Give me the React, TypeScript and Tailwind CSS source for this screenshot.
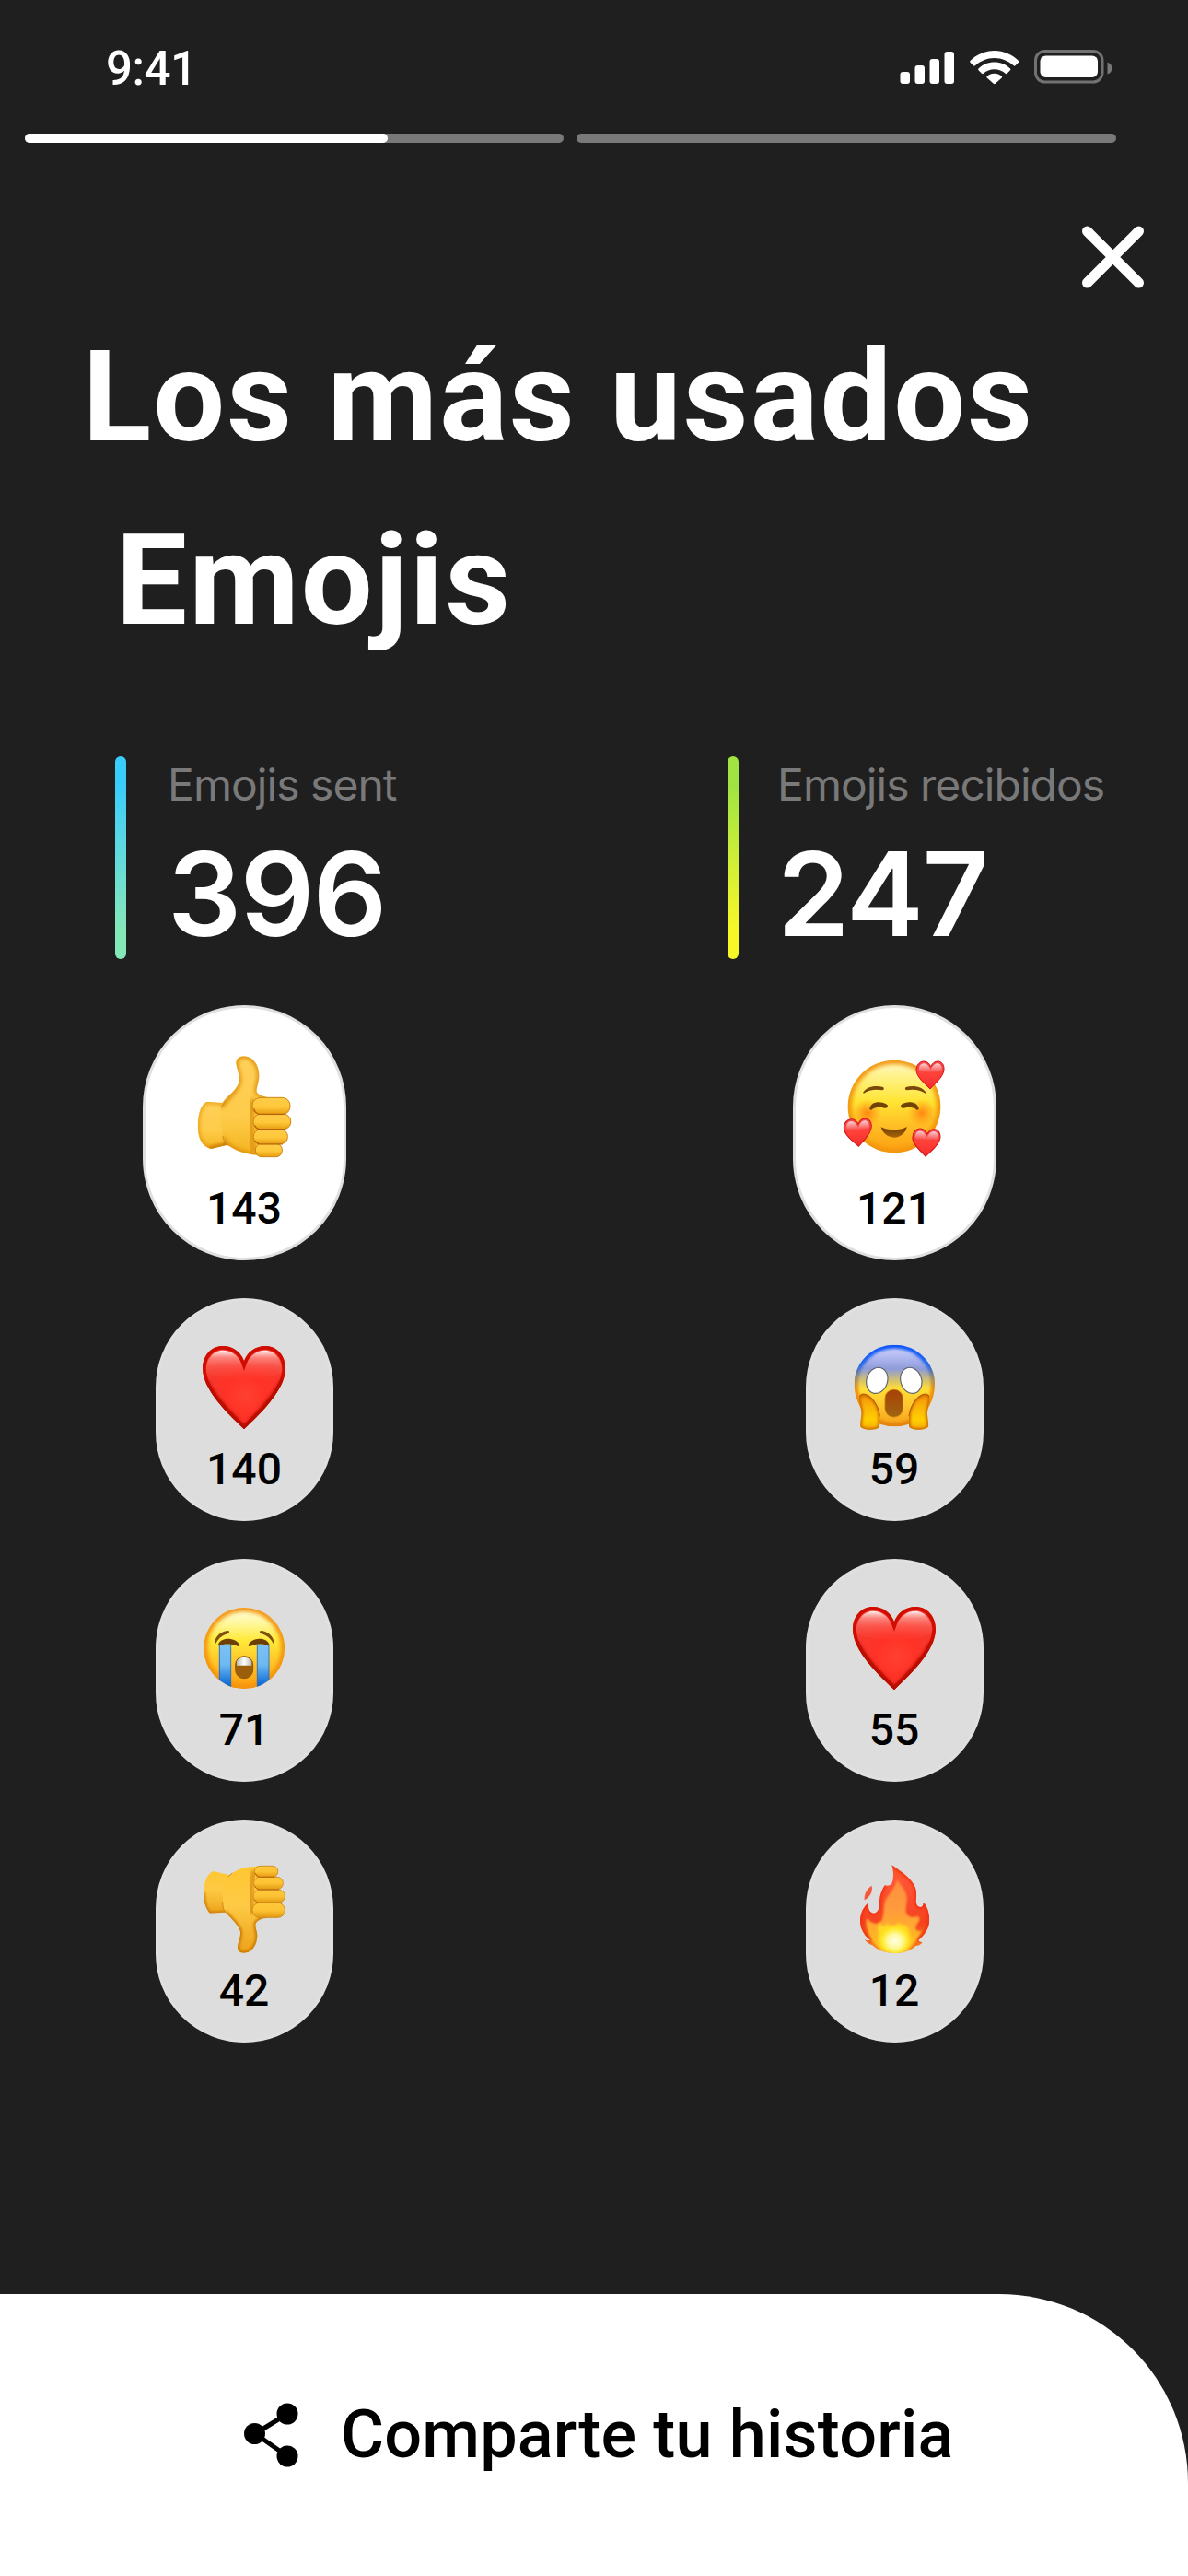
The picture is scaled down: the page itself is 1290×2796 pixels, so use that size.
import type { ComponentType } from "react";

function ThumbsUp() {
  return (
    <svg viewBox="208 196 336 336" className="h-full w-full">
      <defs>
        <linearGradient id="up-skin" x1="0" y1="0" x2="0" y2="1">
          <stop offset="0" stopColor="#FFD05A" />
          <stop offset="0.6" stopColor="#FECC4A" />
          <stop offset="1" stopColor="#F3B01A" />
        </linearGradient>
        <linearGradient id="up-finger" x1="0" y1="0" x2="0" y2="1">
          <stop offset="0" stopColor="#FFCC48" />
          <stop offset="0.55" stopColor="#FEC83A" />
          <stop offset="1" stopColor="#E79C10" />
        </linearGradient>
        <filter id="up-blur" x="-20%" y="-20%" width="140%" height="140%">
          <feGaussianBlur stdDeviation="6" />
        </filter>
        <clipPath id="up-wrist">
          <path d="M258 348 L312 353 L330 480 L318 490 L268 502 C240 496 225 468 225 425 C226 385 238 350 258 348Z" />
        </clipPath>
        <clipPath id="up-hand">
          <path d="M299 370 C300 340 350 320 360 284 C362 258 350 236 350 220 C352 205 364 200 378 200 C406 202 425 230 425 264 C424 292 413 309 418 318 C424 328 445 331 462 338 L440 522 C390 524 350 510 325 491 C308 478 301 440 299 370Z" />
        </clipPath>
      </defs>
      <g clipPath="url(#up-wrist)">
        <rect x="220" y="340" width="120" height="170" fill="url(#up-skin)" />
        <path
          d="M258 348 L312 353 L330 480 L318 490 L268 502 C240 496 225 468 225 425 C226 385 238 350 258 348Z"
          fill="none"
          stroke="#E3960C"
          strokeWidth="10"
          filter="url(#up-blur)"
        />
        <path d="M262 503 L322 490 L322 462" fill="none" stroke="#C06C06" strokeWidth="12" filter="url(#up-blur)" />
      </g>
      <g clipPath="url(#up-hand)">
        <rect x="290" y="195" width="180" height="340" fill="url(#up-skin)" />
        <path
          d="M302 366 C320 335 350 320 360 284 C362 258 350 236 350 220 C352 205 364 200 378 200 C406 202 425 230 425 264 C424 292 413 309 418 318 C424 328 445 331 462 338 L440 522 C390 524 350 510 325 491 L306 466"
          fill="none"
          stroke="#DC8D08"
          strokeWidth="13"
          filter="url(#up-blur)"
        />
        <path d="M410 340 C390 390 396 440 408 525" fill="none" stroke="#E39B17" strokeWidth="24" filter="url(#up-blur)" />
      </g>
      <path d="M303 367 C306 360 310 354 316 348 M307 461 C309 474 314 484 326 491" fill="none" stroke="#D48A17" strokeWidth="3" strokeLinecap="round" />
      <g stroke="#CE8512" strokeWidth="3">
        <rect x="413" y="485" width="87" height="43" rx="20" fill="url(#up-finger)" />
        <rect x="407" y="439" width="111" height="47" rx="22" fill="url(#up-finger)" />
        <rect x="406" y="389" width="122" height="49" rx="23" fill="url(#up-finger)" />
        <rect x="403" y="335" width="123" height="55" rx="26" fill="url(#up-finger)" />
      </g>
      <path d="M409 372 Q412 386 424 389 H508 M411 426 Q416 437 425 438 H508 M412 476 Q417 486 428 487 H500" fill="none" stroke="#B9640B" strokeWidth="3.5" strokeLinecap="round" />
    </svg>
  );
}

function ThumbsDown() {
  return (
    <svg viewBox="198 189 294 294" className="h-full w-full">
      <defs>
        <linearGradient id="down-skin" x1="0" y1="0" x2="0" y2="1">
          <stop offset="0" stopColor="#FFC630" />
          <stop offset="0.45" stopColor="#FECA45" />
          <stop offset="1" stopColor="#ECA017" />
        </linearGradient>
        <linearGradient id="down-finger" x1="0" y1="0" x2="0" y2="1">
          <stop offset="0" stopColor="#FFC83C" />
          <stop offset="0.5" stopColor="#FDC334" />
          <stop offset="1" stopColor="#E39A12" />
        </linearGradient>
        <filter id="down-blur" x="-20%" y="-20%" width="140%" height="140%">
          <feGaussianBlur stdDeviation="5" />
        </filter>
        <clipPath id="down-wrist">
          <path d="M244 213 L305 227 L300 346 L234 350 C219 335 213 310 213 282 C214 250 224 222 244 213Z" />
        </clipPath>
        <clipPath id="down-hand">
          <path d="M296 228 C325 203 352 197 400 198 L420 365 C403 366 390 372 384 381 C378 393 388 405 388 424 C387 452 372 478 347 479 C333 479 324 473 324 461 C325 443 334 430 333 410 C328 388 300 365 284 346 C272 330 270 250 296 228Z" />
        </clipPath>
      </defs>
      <g clipPath="url(#down-wrist)">
        <rect x="205" y="205" width="110" height="150" fill="url(#down-skin)" />
        <path d="M213 282 C213 320 222 342 236 351 L290 347" fill="none" stroke="#C87608" strokeWidth="10" filter="url(#down-blur)" />
      </g>
      <g clipPath="url(#down-hand)">
        <rect x="265" y="190" width="160" height="295" fill="url(#down-skin)" />
        <path
          d="M420 365 C403 366 390 372 384 381 C378 393 388 405 388 424 C387 452 372 478 347 479 C333 479 324 473 324 461 C325 443 334 430 333 410 C328 388 300 365 284 346"
          fill="none"
          stroke="#C97804"
          strokeWidth="12"
          filter="url(#down-blur)"
        />
        <path d="M378 212 C364 260 364 310 372 352" fill="none" stroke="#E09A1B" strokeWidth="18" filter="url(#down-blur)" />
      </g>
      <path d="M294 230 C297 227 301 224 306 220 M275 314 C274 328 278 341 286 348" fill="none" stroke="#D18A17" strokeWidth="3" strokeLinecap="round" />
      <g stroke="#CD8513" strokeWidth="2.5">
        <rect x="379" y="196" width="76" height="36" rx="17" fill="url(#down-finger)" />
        <rect x="377" y="232" width="95" height="40" rx="19" fill="url(#down-finger)" />
        <rect x="375" y="273" width="103" height="43" rx="21" fill="url(#down-finger)" />
        <rect x="372" y="316" width="106" height="48" rx="23" fill="url(#down-finger)" />
      </g>
      <path d="M382 220 Q386 230 395 232 H444 M380 262 Q386 272 394 273 H458 M378 306 Q383 315 392 316 H464" fill="none" stroke="#B9660C" strokeWidth="3" strokeLinecap="round" />
    </svg>
  );
}

function RedHeart() {
  return (
    <svg viewBox="198 171 294 294" className="h-full w-full">
      <defs>
        <radialGradient id="heart-fill" gradientUnits="userSpaceOnUse" cx="352" cy="345" r="150">
          <stop offset="0" stopColor="#FF4030" />
          <stop offset="0.45" stopColor="#FF3226" />
          <stop offset="1" stopColor="#F53A30" />
        </radialGradient>
        <linearGradient id="heart-gloss" x1="0" y1="0" x2="0" y2="1">
          <stop offset="0" stopColor="#fff" stopOpacity="0.95" />
          <stop offset="0.25" stopColor="#FFC0BA" stopOpacity="0.55" />
          <stop offset="0.6" stopColor="#FF8078" stopOpacity="0.3" />
          <stop offset="1" stopColor="#FF6A60" stopOpacity="0" />
        </linearGradient>
        <filter id="heart-blur" x="-20%" y="-20%" width="140%" height="140%">
          <feGaussianBlur stdDeviation="6" />
        </filter>
        <filter id="heart-soft" x="-20%" y="-20%" width="140%" height="140%">
          <feGaussianBlur stdDeviation="2" />
        </filter>
        <clipPath id="heart-clip">
          <path d="M345 454 C318 425 210 335 210 256 C210 214 238 183 276 183 C308 183 334 202 345 232 C356 202 382 183 414 183 C452 183 480 214 480 256 C480 335 372 425 345 454Z" />
        </clipPath>
      </defs>
      <g clipPath="url(#heart-clip)">
        <rect x="200" y="175" width="290" height="290" fill="url(#heart-fill)" />
        <path d="M222 268 C219 228 244 197 276 197 C308 197 330 220 345 250 C360 220 382 197 414 197 C446 197 471 228 468 268 C440 300 250 300 222 268Z" fill="url(#heart-gloss)" filter="url(#heart-soft)" />
        <path d="M345 454 C318 425 210 335 210 256 C210 214 238 183 276 183 C308 183 334 202 345 232 C356 202 382 183 414 183 C452 183 480 214 480 256 C480 335 372 425 345 454Z" fill="none" stroke="#CF0D05" strokeWidth="22" filter="url(#heart-soft)" />
        <path d="M218 300 C248 365 320 428 345 456 C370 428 442 365 472 300" fill="none" stroke="#B00B03" strokeWidth="20" filter="url(#heart-blur)" />
      </g>
    </svg>
  );
}

const miniHeart =
  "M0 45 C-14 30 -45 8 -45 -17 C-45 -33 -34 -45 -21 -45 C-10 -45 -2 -38 2 -28 C7 -39 15 -45 25 -45 C38 -45 46 -33 45 -18 C43 8 14 28 0 45Z";

function MiniHeart({ transform }: { transform: string }) {
  return (
    <g transform={transform}>
      <path d={miniHeart} fill="url(#mini-fill)" stroke="#D3151B" strokeWidth="3" />
      <path d="M-36 -14 C-38 -30 -30 -38 -20 -38 C-10 -38 -3 -28 1 -17 C8 -30 15 -38 24 -38 C34 -38 40 -28 37 -14 C20 -6 -20 -6 -36 -14Z" fill="url(#mini-gloss)" />
    </g>
  );
}

function SmilingHearts() {
  return (
    <svg viewBox="195 196 336 336" className="h-full w-full">
      <defs>
        <linearGradient id="love-face" x1="0" y1="0" x2="0" y2="1">
          <stop offset="0" stopColor="#FFF9C9" />
          <stop offset="0.22" stopColor="#FFF07A" />
          <stop offset="0.45" stopColor="#FFE433" />
          <stop offset="0.7" stopColor="#FFBF24" />
          <stop offset="1" stopColor="#FC9E12" />
        </linearGradient>
        <radialGradient id="love-cheek">
          <stop offset="0" stopColor="#FF7A0C" stopOpacity="0.85" />
          <stop offset="1" stopColor="#FF8A10" stopOpacity="0" />
        </radialGradient>
        <linearGradient id="love-mouth" x1="0" y1="0" x2="0" y2="1">
          <stop offset="0" stopColor="#6B3A04" />
          <stop offset="1" stopColor="#A8650A" />
        </linearGradient>
        <linearGradient id="mini-fill" x1="0" y1="0" x2="0" y2="1">
          <stop offset="0" stopColor="#F0474D" />
          <stop offset="0.5" stopColor="#FF4038" />
          <stop offset="1" stopColor="#F02B2B" />
        </linearGradient>
        <linearGradient id="mini-gloss" x1="0" y1="0" x2="0" y2="1">
          <stop offset="0" stopColor="#fff" stopOpacity="0.75" />
          <stop offset="1" stopColor="#fff" stopOpacity="0" />
        </linearGradient>
        <filter id="love-blur" x="-20%" y="-20%" width="140%" height="140%">
          <feGaussianBlur stdDeviation="7" />
        </filter>
        <clipPath id="love-clip">
          <circle cx="363" cy="364" r="151" />
        </clipPath>
      </defs>
      <g clipPath="url(#love-clip)">
        <circle cx="363" cy="364" r="151" fill="url(#love-face)" />
        <circle cx="363" cy="364" r="149" fill="none" stroke="#F2960A" strokeWidth="22" filter="url(#love-blur)" />
        <circle cx="275" cy="385" r="46" fill="url(#love-cheek)" />
        <circle cx="453" cy="385" r="46" fill="url(#love-cheek)" />
      </g>
      <path d="M261 319 C272 300 300 293 327 301 C331 305 330 310 325 311 C300 306 280 311 264 321Z" fill="#79470A" />
      <path d="M467 319 C455 300 428 293 401 301 C397 305 398 310 403 311 C428 306 448 311 464 321Z" fill="#79470A" />
      <path d="M283 371 C287 354 300 350 314 350 C330 351 341 357 342 362 C343 368 337 370 331 369 C315 364 300 366 289 375 C285 376 283 374 283 371Z" fill="#714207" />
      <path d="M443 371 C439 354 426 350 412 350 C396 351 385 357 384 362 C383 368 389 370 395 369 C411 364 426 366 437 375 C441 376 443 374 443 371Z" fill="#714207" />
      <path d="M320 431 C340 443 385 443 404 430 C402 448 385 465 362 465 C340 465 324 448 320 431Z" fill="url(#love-mouth)" />
      <MiniHeart transform="translate(480 262)" />
      <MiniHeart transform="translate(245 449) rotate(-3)" />
      <MiniHeart transform="translate(467 482) rotate(2)" />
    </svg>
  );
}

function Screaming() {
  return (
    <svg viewBox="186 171 294 294" className="h-full w-full">
      <defs>
        <linearGradient id="scream-face" x1="0" y1="0" x2="0" y2="1">
          <stop offset="0" stopColor="#DADDFC" />
          <stop offset="0.14" stopColor="#B6BDF3" />
          <stop offset="0.3" stopColor="#8E9BDA" />
          <stop offset="0.44" stopColor="#D6C36A" />
          <stop offset="0.53" stopColor="#FFDE36" />
          <stop offset="0.75" stopColor="#FFC42E" />
          <stop offset="1" stopColor="#F39B16" />
        </linearGradient>
        <linearGradient id="scream-edge" x1="0" y1="0" x2="0" y2="1">
          <stop offset="0" stopColor="#0A53FF" />
          <stop offset="0.25" stopColor="#2068EC" />
          <stop offset="0.42" stopColor="#A78D56" />
          <stop offset="0.55" stopColor="#EE9111" />
          <stop offset="1" stopColor="#E48108" />
        </linearGradient>
        <linearGradient id="scream-mouth" x1="0" y1="0" x2="0" y2="1">
          <stop offset="0" stopColor="#A84006" />
          <stop offset="1" stopColor="#9E6510" />
        </linearGradient>
        <linearGradient id="scream-hand" x1="0" y1="0" x2="0" y2="1">
          <stop offset="0" stopColor="#F08C08" />
          <stop offset="0.35" stopColor="#FAB208" />
          <stop offset="0.7" stopColor="#FFCE00" />
          <stop offset="1" stopColor="#F5A908" />
        </linearGradient>
        <filter id="scream-blur" x="-20%" y="-20%" width="140%" height="140%">
          <feGaussianBlur stdDeviation="4" />
        </filter>
        <clipPath id="scream-clip">
          <path d="M334 179 C407 179 465 236 465 306 C465 385 408 445 334 445 C260 445 203 385 203 306 C203 236 261 179 334 179Z" />
        </clipPath>
        <clipPath id="scream-palm">
          <path d="M218 352 C218 342 226 339 235 339 C262 342 286 385 286 410 V444 C284 458 228 460 223 444 C221 430 228 410 226 396 C224 380 218 366 218 352Z" />
        </clipPath>
      </defs>
      <g clipPath="url(#scream-clip)">
        <rect x="200" y="175" width="270" height="275" fill="url(#scream-face)" />
        <path d="M334 179 C407 179 465 236 465 306 C465 385 408 445 334 445 C260 445 203 385 203 306 C203 236 261 179 334 179Z" fill="none" stroke="url(#scream-edge)" strokeWidth="24" filter="url(#scream-blur)" />
      </g>
      <ellipse cx="277" cy="295" rx="34" ry="43" transform="rotate(18 277 295)" fill="#fff" stroke="#5E6269" strokeWidth="3.5" />
      <ellipse cx="388" cy="295" rx="34" ry="43" transform="rotate(-18 388 295)" fill="#fff" stroke="#5E6269" strokeWidth="3.5" />
      <rect x="303" y="325" width="58" height="89" rx="28" fill="url(#scream-mouth)" stroke="#C97C0E" strokeWidth="2.5" />
      {[undefined, "translate(667 0) scale(-1 1)"].map((transform, i) => (
        <g key={i} transform={transform}>
          <g clipPath="url(#scream-palm)">
            <rect x="210" y="335" width="80" height="125" fill="url(#scream-hand)" />
            <path d="M218 352 C218 342 226 339 235 339 C262 342 286 385 286 410 V444 C284 458 228 460 223 444 C221 430 228 410 226 396 C224 380 218 366 218 352Z" fill="none" stroke="#C86203" strokeWidth="10" filter="url(#scream-blur)" />
          </g>
          <path d="M220 347 C224 339 231 338 239 340 C264 346 284 385 286 412" fill="none" stroke="#A95205" strokeWidth="2.5" />
        </g>
      ))}
    </svg>
  );
}

function Crying() {
  return (
    <svg viewBox="198 180 294 294" className="h-full w-full">
      <defs>
        <linearGradient id="cry-face" x1="0" y1="0" x2="0" y2="1">
          <stop offset="0" stopColor="#FFFDE0" />
          <stop offset="0.2" stopColor="#FFF79A" />
          <stop offset="0.4" stopColor="#FFEA3A" />
          <stop offset="0.65" stopColor="#FFC82A" />
          <stop offset="1" stopColor="#FB9A10" />
        </linearGradient>
        <linearGradient id="cry-tear" x1="0" y1="0" x2="0" y2="1">
          <stop offset="0" stopColor="#7CC1F5" />
          <stop offset="0.45" stopColor="#6DB9F2" />
          <stop offset="0.9" stopColor="#0A67D6" />
        </linearGradient>
        <linearGradient id="cry-teeth">
          <stop offset="0" stopColor="#B9B9B5" />
          <stop offset="0.5" stopColor="#fff" />
          <stop offset="1" stopColor="#B9B9B5" />
        </linearGradient>
        <filter id="cry-blur" x="-20%" y="-20%" width="140%" height="140%">
          <feGaussianBlur stdDeviation="6" />
        </filter>
        <clipPath id="cry-clip">
          <circle cx="345.5" cy="327" r="132" />
        </clipPath>
        <clipPath id="cry-mouth">
          <rect x="317" y="353" width="57" height="72" rx="28" />
        </clipPath>
      </defs>
      <g clipPath="url(#cry-clip)">
        <circle cx="345.5" cy="327" r="132" fill="url(#cry-face)" />
        <circle cx="345.5" cy="327" r="131" fill="none" stroke="#F39307" strokeWidth="22" filter="url(#cry-blur)" />
        <rect x="264" y="313" width="38" height="150" fill="url(#cry-tear)" />
        <rect x="388" y="313" width="38" height="150" fill="url(#cry-tear)" />
        <path d="M265 315 V460 M302 315 V460 M388 315 V460 M426 315 V460" stroke="#1667C4" strokeWidth="2.5" />
      </g>
      <path d="M249 309 C252 286 272 271 294 270 C299 272 298 277 292 280 C275 284 262 295 253 311 C250 313 249 312 249 309Z" fill="#80500A" />
      <path d="M443 309 C440 286 420 271 399 270 C394 272 395 277 401 280 C418 284 431 295 440 311 C442 313 443 312 443 309Z" fill="#80500A" />
      <path d="M261 314 C268 298 288 295 301 297 C316 299 328 307 331 317 C331 322 326 322 320 319 C305 312 278 311 265 319 C261 319 260 317 261 314Z" fill="#6E3F04" />
      <path d="M427 314 C420 298 402 295 389 297 C374 299 362 307 359 317 C359 322 364 322 370 319 C385 312 410 311 423 319 C427 319 428 317 427 314Z" fill="#6E3F04" />
      <g clipPath="url(#cry-mouth)">
        <rect x="315" y="350" width="62" height="80" fill="#9C5E08" />
        <path d="M321 383 V366 Q345 346 370 366 V383Z" fill="url(#cry-teeth)" />
      </g>
      <rect x="317" y="353" width="57" height="72" rx="28" fill="none" stroke="#8A560C" strokeWidth="3" />
    </svg>
  );
}

function Fire() {
  return (
    <svg viewBox="186 189 294 294" className="h-full w-full">
      <defs>
        <linearGradient id="fire-outer" x1="0" y1="0" x2="0" y2="1">
          <stop offset="0" stopColor="#F4581F" />
          <stop offset="0.2" stopColor="#FF5436" />
          <stop offset="0.65" stopColor="#F5421F" />
          <stop offset="1" stopColor="#FB8A1C" />
        </linearGradient>
        <linearGradient id="fire-inner" x1="0" y1="0" x2="0" y2="1">
          <stop offset="0" stopColor="#FF8F3E" />
          <stop offset="0.4" stopColor="#FF9B3D" />
          <stop offset="0.7" stopColor="#FFAE2B" />
          <stop offset="1" stopColor="#FFC81C" />
        </linearGradient>
        <radialGradient id="fire-core">
          <stop offset="0" stopColor="#FFFFE6" />
          <stop offset="0.4" stopColor="#FFF99A" />
          <stop offset="0.7" stopColor="#FFE826" stopOpacity="0.9" />
          <stop offset="1" stopColor="#FFC81C" stopOpacity="0" />
        </radialGradient>
        <filter id="fire-blur" x="-20%" y="-20%" width="140%" height="140%">
          <feGaussianBlur stdDeviation="4" />
        </filter>
        <filter id="fire-soft" x="-20%" y="-20%" width="140%" height="140%">
          <feGaussianBlur stdDeviation="2.5" />
        </filter>
        <clipPath id="fire-clip">
          <path d="M325 193 C352 212 397 240 404 275 C408 296 400 312 408 325 C416 335 430 330 428 314 C442 328 449 355 447 378 C445 402 431 420 412 438 C417 444 421 445 425 443 C420 452 412 455 403 456 C385 473 360 480 334 480 C306 479 280 472 262 454 C250 450 241 442 236 434 C242 439 250 440 256 438 C238 424 222 405 222 372 C224 346 234 328 250 315 C246 333 251 347 264 350 C286 350 284 325 285 308 C287 288 294 272 302 259 C311 261 321 260 325 253 C332 236 331 212 325 193Z" />
        </clipPath>
      </defs>
      <path d="M260 260 C264 282 252 298 236 307 C234 287 244 270 260 260Z" fill="#F4593A" />
      <g clipPath="url(#fire-clip)">
        <rect x="215" y="185" width="240" height="300" fill="url(#fire-outer)" />
        <path
          d="M342 240 C356 262 372 275 374 300 C375 326 362 350 382 360 C396 368 412 354 415 366 C418 380 398 388 404 402 C410 412 420 408 424 404 C410 440 380 476 334 476 C280 476 252 440 246 402 C240 390 240 370 246 366 C256 385 284 390 293 372 C302 350 296 325 306 304 C318 284 336 268 342 240Z"
          fill="url(#fire-inner)"
          filter="url(#fire-soft)"
        />
        <path d="M286 376 C288 404 302 392 310 384 C320 398 340 398 346 380 C352 392 376 384 380 404 C384 430 374 470 335 480 C290 470 270 420 286 376Z" fill="#FFDC22" filter="url(#fire-blur)" />
        <ellipse cx="335" cy="440" rx="62" ry="58" fill="url(#fire-core)" />
        <path
          d="M256 438 C238 424 222 405 222 372 C224 346 234 328 250 315 C246 333 251 347 264 350 C286 350 284 325 285 308 C287 288 294 272 302 259 M404 275 C408 296 400 312 408 325 C416 335 430 330 428 314 C442 328 449 355 447 378 C445 402 431 420 412 438 M325 193 C352 212 397 240 404 275"
          fill="none"
          stroke="#F02F0E"
          strokeWidth="10"
          filter="url(#fire-blur)"
        />
      </g>
    </svg>
  );
}

type Reaction = { Icon: ComponentType; count: number };

const sent: Reaction[] = [
  { Icon: ThumbsUp, count: 143 },
  { Icon: RedHeart, count: 140 },
  { Icon: Crying, count: 71 },
  { Icon: ThumbsDown, count: 42 },
];

const received: Reaction[] = [
  { Icon: SmilingHearts, count: 121 },
  { Icon: Screaming, count: 59 },
  { Icon: RedHeart, count: 55 },
  { Icon: Fire, count: 12 },
];

function ReactionColumn({ items }: { items: Reaction[] }) {
  return (
    <div className="flex w-[221px] flex-col items-center gap-[41px]">
      {items.map(({ Icon, count }, i) =>
        i === 0 ? (
          <div
            key={i}
            className="flex h-[277px] w-[221px] flex-col items-center rounded-full border-[3px] border-[#e0e0e0] bg-white pt-[51px]"
          >
            <div className="h-28 w-28">
              <Icon />
            </div>
            <span className="mt-[31px] text-[48px] leading-[48px] font-medium">{count}</span>
          </div>
        ) : (
          <div
            key={i}
            className="flex h-[242px] w-[193px] flex-col items-center rounded-full border-[3px] border-[#e0e0e0] bg-[#ddd] pt-[45px]"
          >
            <div className="h-[98px] w-[98px]">
              <Icon />
            </div>
            <span className="mt-4 text-[48px] leading-[48px] font-medium">{count}</span>
          </div>
        ),
      )}
    </div>
  );
}

type StatProps = { label: string; value: number; bar: string; className: string };

function Stat({ label, value, bar, className }: StatProps) {
  return (
    <div className={`flex h-[220px] shrink-0 ${className}`}>
      <div className={`h-full w-3 shrink-0 rounded-full ${bar}`} />
      <div className="font-['Inter',sans-serif] whitespace-nowrap">
        <p className="mt-[7px] text-[48px] leading-[48px] tracking-[-0.96px] text-[#797979]">{label}</p>
        <p className="mt-[31px] text-[126px] leading-[126px] font-semibold tracking-[-1.5px] text-white">{value}</p>
      </div>
    </div>
  );
}

function StatusIcons() {
  return (
    <svg viewBox="977 54 231 38" className="h-[38px] w-[231px]" fill="#fff">
      <rect x="977.5" y="78" width="10.5" height="13" rx="3" />
      <rect x="993.5" y="71" width="10.5" height="20" rx="3" />
      <rect x="1009.5" y="64" width="10.5" height="27" rx="3" />
      <rect x="1025.5" y="56" width="10.5" height="35" rx="3" />
      <path d="M1079.7 55 C1089.8 55 1099 59 1106 66 C1106.6 66.5 1106.6 67.2 1106 67.8 L1102.5 71.3 C1102 71.8 1101.3 71.8 1100.7 71.3 C1095 66 1087.6 62.9 1079.7 62.9 C1071.9 62.9 1064.5 66 1058.8 71.3 C1058.2 71.8 1057.5 71.8 1057 71.3 L1053.5 67.8 C1053 67.2 1053 66.5 1053.5 66 C1060.5 59 1069.8 55 1079.7 55Z" />
      <path d="M1079.7 67.5 C1086.5 67.5 1092.5 70 1097 74.5 C1097.5 75 1097.5 75.7 1097 76.3 L1093.5 79.8 C1093 80.3 1092.2 80.3 1091.7 79.8 C1088.4 76.9 1084.2 75.3 1079.7 75.3 C1075.3 75.3 1071.1 76.9 1067.9 79.8 C1067.3 80.3 1066.6 80.3 1066 79.8 L1062.5 76.3 C1062 75.7 1062 75 1062.5 74.5 C1067 70 1073.2 67.5 1079.7 67.5Z" />
      <path d="M1079.7 79.8 C1082.8 79.8 1085.5 80.8 1087.7 82.8 C1088.3 83.3 1088.3 84 1087.8 84.6 L1080.7 90.8 C1080.1 91.3 1079.4 91.3 1078.8 90.8 L1071.7 84.6 C1071.2 84 1071.2 83.3 1071.8 82.8 C1074 80.8 1076.7 79.8 1079.7 79.8Z" />
      <rect x="1124.5" y="55.5" width="72.5" height="33.5" rx="10" fill="none" stroke="#727272" strokeWidth="3" />
      <rect x="1129.5" y="60.5" width="62.5" height="23.5" rx="6" />
      <path d="M1202.5 67.5 C1205.8 69 1207.5 71 1207.5 74 C1207.5 77 1205.8 79.3 1202.5 80.5Z" fill="#797979" />
    </svg>
  );
}

export default function App() {
  return (
    <div className="flex h-[2796px] w-[1290px] flex-col overflow-hidden bg-[#1f1f1f] font-['Roboto',sans-serif] text-black">
      <header className="flex h-[144.5px] shrink-0 items-start justify-between pr-[82px] pl-[115px]">
        <span className="mt-[49px] text-[51px] leading-[51px] font-medium tracking-[-0.5px] text-white">9:41</span>
        <div className="mt-[54px]">
          <StatusIcons />
        </div>
      </header>

      <div className="flex gap-[14px] px-[27px]">
        <div className="h-[10.5px] w-[585px] rounded-full bg-[#797979]">
          <div className="h-full w-[393.5px] rounded-full bg-white" />
        </div>
        <div className="h-[10.5px] w-[586px] rounded-full bg-[#797979]" />
      </div>

      <button type="button" aria-label="Cerrar" className="mt-[90px] ml-[1174px] h-[68px] w-[69px] shrink-0">
        <svg viewBox="0 0 69 68" className="h-full w-full">
          <path d="M6.5 6 L62.5 62 M62.5 6 L6.5 62" stroke="#fff" strokeWidth="11" strokeLinecap="round" />
        </svg>
      </button>

      <h1 className="mt-[19px] text-[138px] leading-[199px] font-bold tracking-[2.07px] text-white">
        <span className="block pl-[89.5px]">Los más usados</span>
        <span className="block pl-[125.5px]">Emojis</span>
      </h1>

      <section className="mt-[91px] flex pl-[125px]">
        <Stat
          label="Emojis sent"
          value={396}
          bar="bg-linear-to-b from-[#39cdfb] from-15% to-[#84e7b8] to-85%"
          className="w-[665px] gap-[45px]"
        />
        <Stat
          label="Emojis recibidos"
          value={247}
          bar="bg-linear-to-b from-[#a0e441] from-15% to-[#f7f727] to-85%"
          className="gap-[42px]"
        />
      </section>

      <section className="mt-[50px] flex gap-[485px] pl-[154.5px]">
        <ReactionColumn items={sent} />
        <ReactionColumn items={received} />
      </section>

      <footer className="mt-auto h-[306.5px] shrink-0 rounded-tr-[205px] bg-white pt-[117.5px]">
        <button type="button" className="flex items-start pl-[265px]">
          <svg viewBox="0 0 59 70" className="mt-px h-[70px] w-[59px]">
            <path d="M47 12 L12 33.5 L47 58" fill="none" stroke="#000" strokeWidth="5" />
            <circle cx="47" cy="12" r="11.5" />
            <circle cx="11.5" cy="33.5" r="11.5" />
            <circle cx="47" cy="58" r="11.5" />
          </svg>
          <span className="pl-[46px] text-[72px] leading-[72px] font-medium tracking-[0.2px]">Comparte tu historia</span>
        </button>
      </footer>
    </div>
  );
}
